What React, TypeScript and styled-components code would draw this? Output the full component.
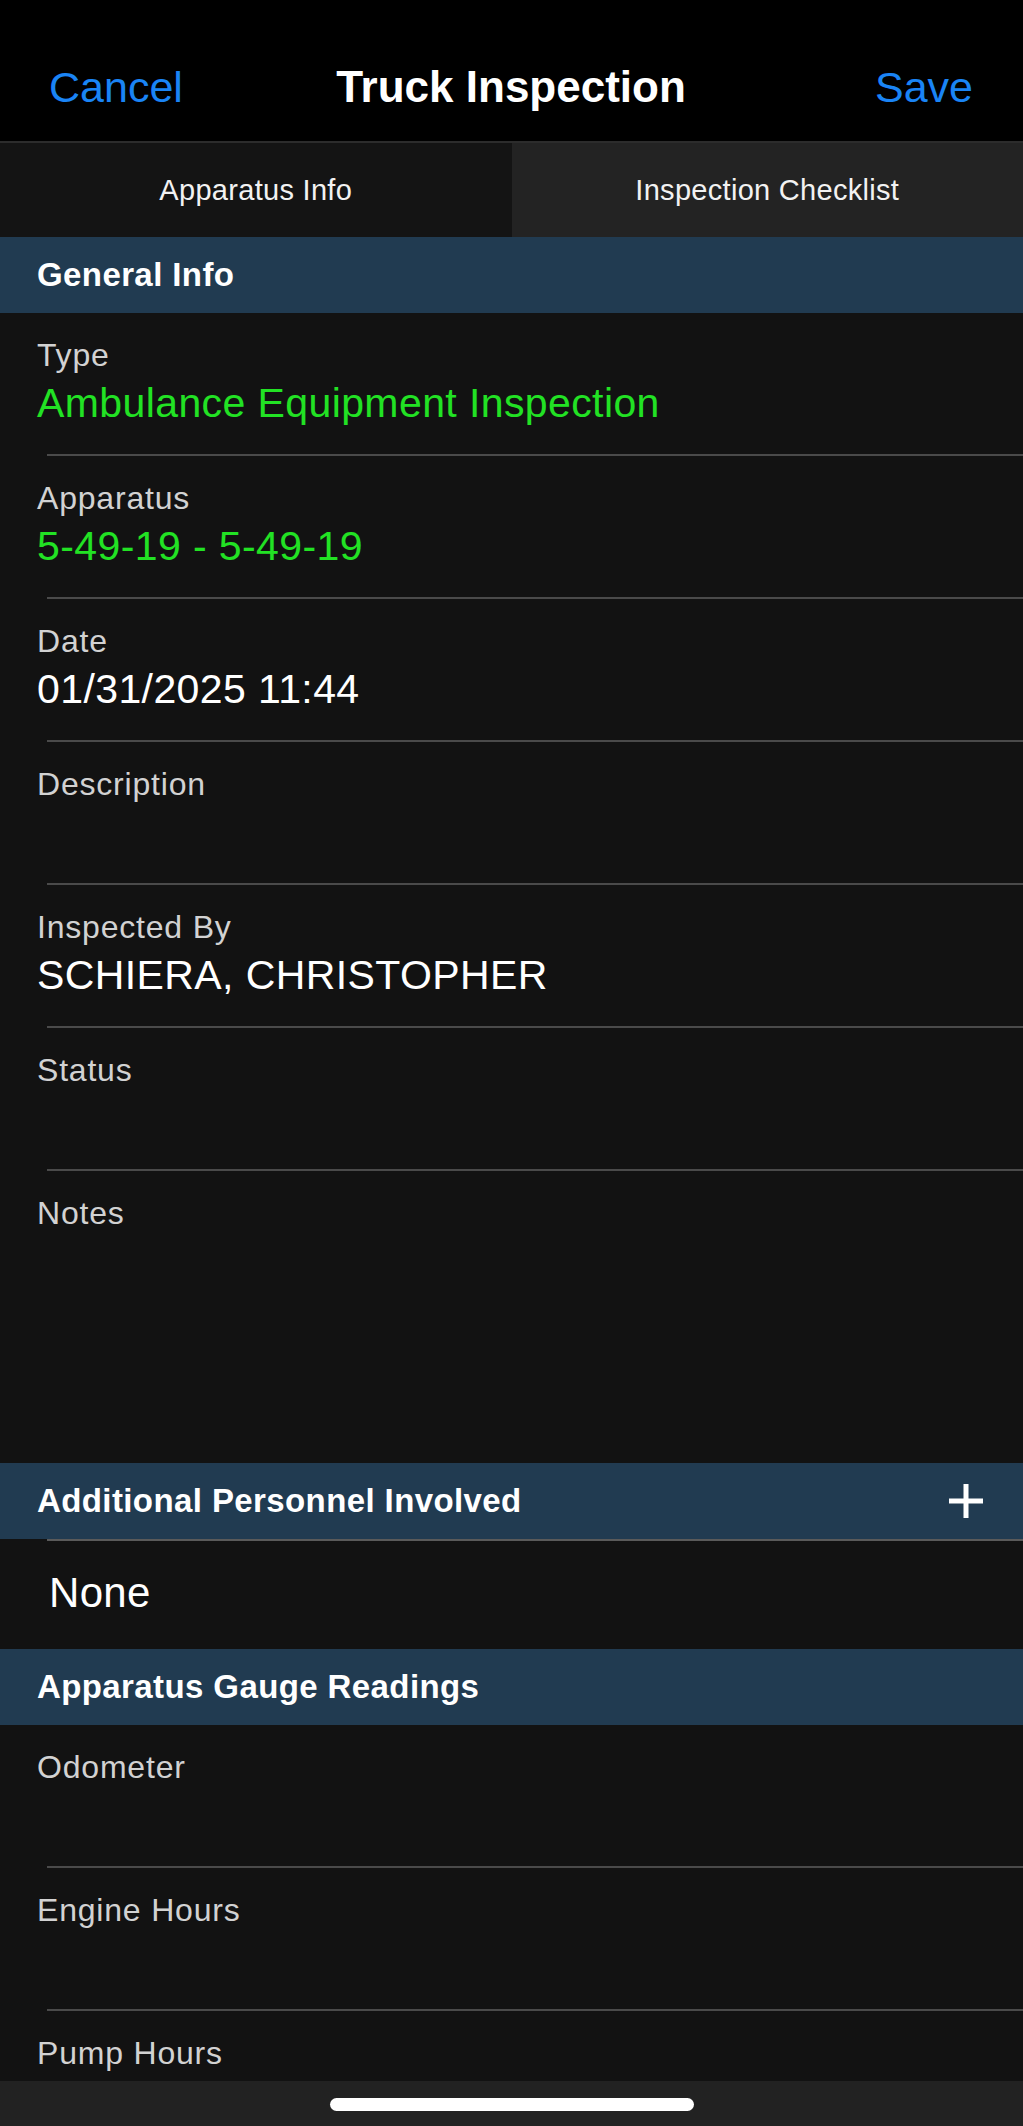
import React from 'react';
import styled, { createGlobalStyle } from 'styled-components';

const GlobalStyle = createGlobalStyle`
    html, body {
        margin: 0;
        padding: 0;
        background: #121212;
    }
    * {
        box-sizing: border-box;
    }
`;

const Screen = styled.div`
    width: 1023px;
    height: 2126px;
    display: flex;
    flex-direction: column;
    background: #121212;
    font-family: 'Liberation Sans', Arial, sans-serif;
    color: #ffffff;
    overflow: hidden;
`;

const NavBar = styled.div`
    height: 141px;
    flex-shrink: 0;
    background: #000;
    display: flex;
    align-items: center;
    justify-content: space-between;
    padding: 33px 50px 0 49px;
`;

const NavButton = styled.div`
    font-size: 43px;
    color: #1a84f5;
    min-width: 136px;
    text-align: ${props => (props.$right ? 'right' : 'left')};
`;

const NavTitle = styled.div`
    font-size: 44px;
    font-weight: 700;
`;

const Tabs = styled.div`
    height: 96px;
    flex-shrink: 0;
    display: flex;
    border-top: 2px solid #2c2c2c;
`;

const Tab = styled.div`
    flex: 1;
    display: flex;
    align-items: center;
    justify-content: center;
    font-size: 29px;
    letter-spacing: 0.3px;
    color: #f2f2f2;
    background: ${props => (props.$active ? '#141414' : '#232323')};
`;

const Content = styled.div`
    flex: 1;
    min-height: 0;
    overflow: hidden;
    display: flex;
    flex-direction: column;
`;

const SectionHeader = styled.div`
    height: 76px;
    flex-shrink: 0;
    background: #213b51;
    display: flex;
    align-items: center;
    justify-content: space-between;
    padding: 0 40px 0 37px;
    font-size: 33px;
    font-weight: 700;
    letter-spacing: 0.4px;
`;

const PlusIcon = () => (
    <svg width="34" height="34" viewBox="0 0 34 34">
        <path d="M17 0v34M0 17h34" stroke="#ffffff" strokeWidth="5" />
    </svg>
);

const Field = styled.div`
    height: ${props => props.$height || 143}px;
    flex-shrink: 0;
    padding: 22px 0 0 37px;
    position: relative;
    &::after {
        content: '';
        display: ${props => (props.$last ? 'none' : 'block')};
        position: absolute;
        left: 47px;
        right: 0;
        bottom: 0;
        height: 2px;
        background: #4a4a4a;
    }
`;

const Label = styled.div`
    font-size: 32px;
    line-height: 40px;
    letter-spacing: 0.8px;
    color: #d2d2d2;
`;

const Value = styled.div`
    font-size: 41px;
    line-height: 52px;
    letter-spacing: 0.4px;
    margin-top: 2px;
    color: ${props => (props.$green ? '#22e224' : '#ffffff')};
`;

const Divider = styled.div`
    height: 4px;
    flex-shrink: 0;
    margin-left: 47px;
    border-top: 2px solid #5a5a5a;
`;

const EmptyRow = styled.div`
    height: 106px;
    flex-shrink: 0;
    display: flex;
    align-items: center;
    padding: 0 0 6px 49px;
    font-size: 42px;
    letter-spacing: 0.3px;
`;

const BottomBar = styled.div`
    height: 45px;
    flex-shrink: 0;
    background: #222222;
    display: flex;
    justify-content: center;
    padding-top: 17px;
`;

const HomeIndicator = styled.div`
    width: 364px;
    height: 13px;
    border-radius: 7px;
    background: #ffffff;
`;

const generalInfo = [
    { label: 'Type', value: 'Ambulance Equipment Inspection', green: true },
    { label: 'Apparatus', value: '5-49-19 - 5-49-19', green: true },
    { label: 'Date', value: '01/31/2025 11:44' },
    { label: 'Description', value: '' },
    { label: 'Inspected By', value: 'SCHIERA, CHRISTOPHER' },
    { label: 'Status', value: '' },
];

const gauges = ['Odometer', 'Engine Hours', 'Pump Hours'];

export default function App() {
    return (
        <Screen>
            <GlobalStyle />
            <NavBar>
                <NavButton>Cancel</NavButton>
                <NavTitle>Truck Inspection</NavTitle>
                <NavButton $right>Save</NavButton>
            </NavBar>
            <Tabs>
                <Tab $active>Apparatus Info</Tab>
                <Tab>Inspection Checklist</Tab>
            </Tabs>
            <Content>
                <SectionHeader>General Info</SectionHeader>
                {generalInfo.map(field => (
                    <Field key={field.label}>
                        <Label>{field.label}</Label>
                        {field.value && <Value $green={field.green}>{field.value}</Value>}
                    </Field>
                ))}
                <Field $height={292} $last>
                    <Label>Notes</Label>
                </Field>
                <SectionHeader>
                    Additional Personnel Involved
                    <PlusIcon />
                </SectionHeader>
                <Divider />
                <EmptyRow>None</EmptyRow>
                <SectionHeader>Apparatus Gauge Readings</SectionHeader>
                {gauges.map(g => (
                    <Field key={g}>
                        <Label>{g}</Label>
                    </Field>
                ))}
            </Content>
            <BottomBar>
                <HomeIndicator />
            </BottomBar>
        </Screen>
    );
}
